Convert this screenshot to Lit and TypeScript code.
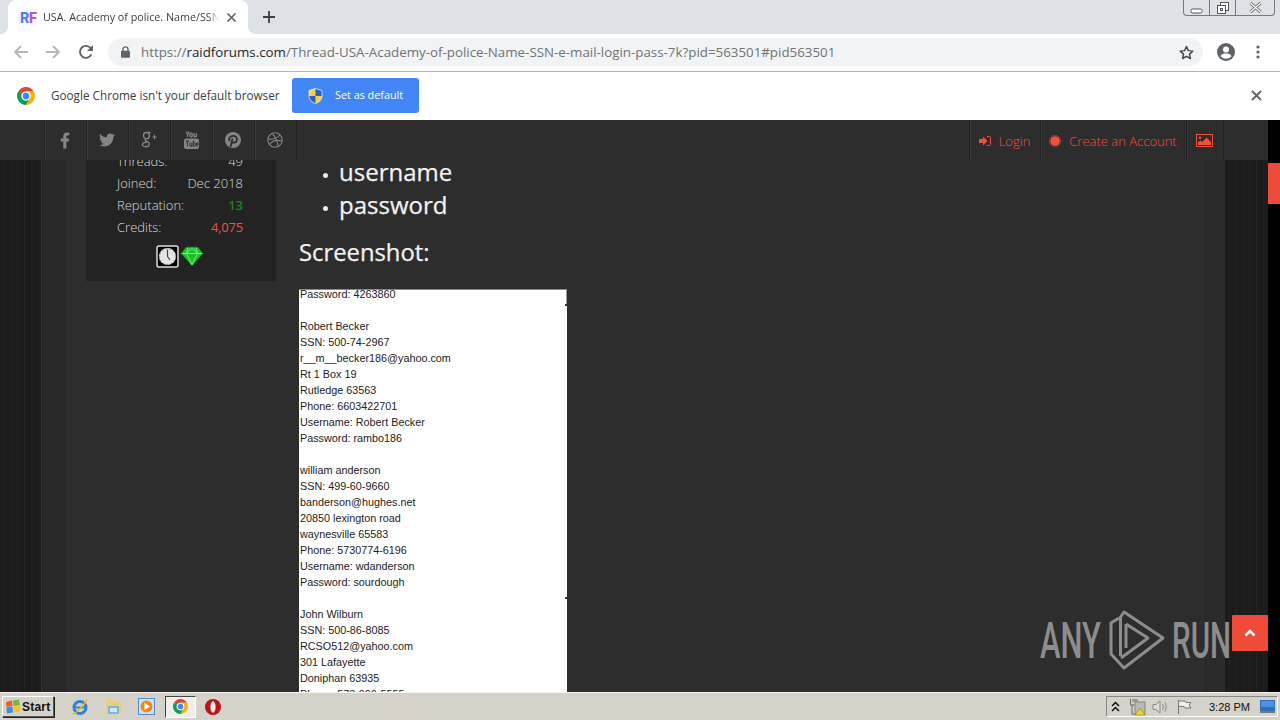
import { LitElement, html, css, svg } from "lit";
import { customElement } from "lit/decorators.js";

const chromeLogo = (size: number) => html`<svg width=${size} height=${size} viewBox="4 4 40 40">
  <path fill="#db4437" d="M6.68 14A20 20 0 0 1 41.32 14L24 14A10 10 0 0 0 15.34 19Z"/>
  <path fill="#f4b400" d="M41.32 14A20 20 0 0 1 24 44L32.66 29A10 10 0 0 0 24 14Z"/>
  <path fill="#0f9d58" d="M24 44A20 20 0 0 1 6.68 14L15.34 19A10 10 0 0 0 32.66 29Z"/>
  <circle cx="24" cy="24" r="10" fill="#fff"/><circle cx="24" cy="24" r="7.5" fill="#4285f4"/>
</svg>`;

const navIcons = [
  html`<svg width="10" height="17" viewBox="0 0 320 512"><path fill="currentColor" d="M279.14 288l14.22-92.66h-88.91v-60.13c0-25.35 12.42-50.06 52.24-50.06h40.42V6.26S260.43 0 225.36 0c-73.22 0-121.08 44.38-121.08 124.72v70.62H22.89V288h81.39v224h100.17V288z"/></svg>`,
  html`<svg width="16" height="16" viewBox="0 0 512 512"><path fill="currentColor" d="M459.37 151.716c.325 4.548.325 9.097.325 13.645 0 138.72-105.583 298.558-298.558 298.558-59.452 0-114.68-17.219-161.137-47.106 8.447.974 16.568 1.299 25.34 1.299 49.055 0 94.213-16.568 130.274-44.832-46.132-.975-84.792-31.188-98.112-72.772 6.498.974 12.995 1.624 19.818 1.624 9.421 0 18.843-1.3 27.614-3.573-48.081-9.747-84.143-51.98-84.143-102.985v-1.299c13.969 7.797 30.214 12.67 47.431 13.319-28.264-18.843-46.781-51.005-46.781-87.391 0-19.492 5.197-37.36 14.294-52.954 51.655 63.675 129.3 105.258 216.365 109.807-1.624-7.797-2.599-15.918-2.599-24.04 0-57.828 46.782-104.934 104.934-104.934 30.213 0 57.502 12.67 76.67 33.137 23.715-4.548 46.456-13.32 66.599-25.34-7.798 24.366-24.366 44.833-46.132 57.827 21.117-2.273 41.584-8.122 60.426-16.243-14.292 20.791-32.161 39.308-52.628 54.253z"/></svg>`,
  html`<svg width="17" height="18" viewBox="0 0 17 18" fill="none" stroke="currentColor" stroke-width="1.4"><path d="M9.5 1.5H5.5C3.5 1.5 2.5 3 2.5 4.5S3.6 7.8 5.5 7.8 8.4 6.2 8.4 4.7 7.4 1.6 5.6 1.6M4.6 8C3.8 8.8 4.4 9.6 5.2 10L7.4 11.4C9 12.5 8.6 15.8 5 15.8 1.8 15.8 0.8 13.8 1.8 12.5 2.6 11.4 4 11.2 5.6 11.2"/><path d="M13.5 3.8V8.2M11.3 6H15.7" stroke-width="1.2"/></svg>`,
  html`<svg width="15" height="18" viewBox="0 0 15 18"><g fill="none" stroke="currentColor" stroke-width="1.3"><path d="M2 0.5 3.6 3.2V6M5.2 0.5 3.6 3.2"/><rect x="6" y="2.2" width="2.2" height="3.6" rx="1"/><path d="M10 2V5.2C10 6 11.5 6 12 5.2M12.4 2V6"/></g><path fill="currentColor" d="M2 7.5H13C14 7.5 15 8.4 15 9.5V16C15 17 14 18 13 18H2C1 18 0 17 0 16V9.5C0 8.4 1 7.5 2 7.5Z"/><path fill="none" stroke="#2d2d2d" stroke-width="1" d="M1.8 10H5M3.4 10V15.5M6 11.5V15C6.2 15.8 7.3 15.5 7.8 15M7.9 11.5V15.5M9.4 9.6V15.5M9.4 12C10.6 11 11.3 11.7 11.3 12.8V14.2C11.3 15.3 10.2 15.8 9.4 15M12.4 13.3H14.3C14.3 11 12.4 11 12.4 13V14.3C12.4 15.5 13.6 15.7 14.3 15"/></svg>`,
  html`<svg width="16" height="16" viewBox="0 0 16 16"><circle cx="8" cy="8" r="8" fill="currentColor"/><path fill="none" stroke="#2d2d2d" stroke-width="1.8" d="M5.5 15 7.5 6.5M4.6 9.2C3 6.2 5.4 3.8 8.2 3.8 11 3.8 12.6 6 11.8 8.4 11 11 8 11.2 7 9.4"/></svg>`,
  html`<svg width="16" height="16" viewBox="0 0 16 16" fill="none" stroke="currentColor" stroke-width="1.1"><circle cx="8" cy="8" r="7.2"/><path d="M5.2 1.4C8 4.5 10.5 9.5 11.2 14.4M1 7.2C5 7.6 10 6.4 13 3M2.5 12.6C4.5 9.5 9 7.4 15 9"/></svg>`,
];

const lines = [
  "Password: 4263860", "", "Robert Becker", "SSN: 500-74-2967", "r__m__becker186@yahoo.com", "Rt 1 Box 19",
  "Rutledge 63563", "Phone: 6603422701", "Username: Robert Becker", "Password: rambo186", "",
  "william anderson", "SSN: 499-60-9660", "banderson@hughes.net", "20850 lexington road", "waynesville 65583",
  "Phone: 5730774-6196", "Username: wdanderson", "Password: sourdough", "",
  "John Wilburn", "SSN: 500-86-8085", "RCSO512@yahoo.com", "301 Lafayette", "Doniphan 63935", "Phone: 573-996-5555",
];

@customElement("app-root")
export class AppRoot extends LitElement {
  static styles = css`
    :host { display: flex; flex-direction: column; width: 1280px; height: 720px; overflow: hidden; position: relative; font-family: "Open Sans", "Noto Sans", sans-serif; background: #fff; }
    svg { display: block; flex: none; }

    .tabstrip { height: 34px; flex: none; background: #dee1e6; display: flex; align-items: stretch; padding-left: 8px; }
    .tab { position: relative; width: 240px; background: #fff; border-radius: 8px 8px 0 0; display: flex; align-items: center; padding-left: 12px; box-sizing: border-box; }
    .tab::before, .tab::after { content: ""; position: absolute; bottom: 0; width: 8px; height: 8px; }
    .tab::before { left: -8px; background: radial-gradient(circle at 0 0, transparent 8px, #fff 8.5px); }
    .tab::after { right: -8px; background: radial-gradient(circle at 100% 0, transparent 8px, #fff 8.5px); }
    .fav { width: 23px; flex: none; font: 800 14px Inter, sans-serif; letter-spacing: -0.2px; }
    .fav .r { color: #5a7cf2; } .fav .f { color: #c04fe4; }
    .title { width: 176px; overflow: hidden; white-space: nowrap; font-size: 10.75px; color: #3c4043; -webkit-mask-image: linear-gradient(to right, #000 165px, transparent 176px); mask-image: linear-gradient(to right, #000 165px, transparent 176px); }
    .tabx { margin-left: 7px; color: #5f6368; }
    .plus { margin-left: 15px; align-self: center; color: #3c4043; }
    .winctl { margin-left: auto; margin-right: 5px; width: 92px; height: 16px; box-sizing: border-box; display: flex; border: 1px solid #717784; border-top: none; border-radius: 0 0 4px 4px; }
    .winctl div { width: 25px; flex: none; display: flex; align-items: center; justify-content: center; }
    .winctl div:last-child { flex: 1; }
    .winctl div + div { border-left: 1px solid #717784; }

    .toolbar { flex: none; background: #fff; border-bottom: 1px solid #b4b4b4; display: flex; align-items: center; padding: 0 0 1px 13px; box-sizing: content-box; height: 36px; }
    .navbtn { width: 32px; display: flex; justify-content: flex-start; flex: none; }
    .omni { margin-left: -1px; width: 1095px; height: 28px; background: #f1f3f4; border-radius: 14px; display: flex; align-items: center; padding-left: 13px; box-sizing: border-box; flex: none; }
    .url { margin-left: 11px; font-size: 13.33px; color: #6f7478; white-space: nowrap; }
    .url b { font-weight: 400; color: #24272a; }
    .star { margin-left: auto; margin-right: 9px; }
    .avatar { margin-left: 14px; }
    .dots { margin-left: 21px; }

    .infobar { height: 48px; flex: none; background: #fff; display: flex; align-items: center; padding: 0 0 1px 17px; box-sizing: border-box; }
    .infotext { margin-left: 16px; font-size: 11.73px; color: #3c4043; white-space: nowrap; width: 241px; padding-bottom: 1px; }
    .setbtn { width: 127px; height: 35px; background: #4285f4; border-radius: 3px; display: flex; align-items: center; padding-left: 16px; box-sizing: border-box; color: #fff; font-size: 10.8px; gap: 12px; }
    .setbtn span { padding-bottom: 2px; }
    .infox { margin-left: auto; margin-right: 18px; color: #5f6368; }

    .page { flex: 1; min-height: 0; display: flex; flex-direction: column; background: #2d2d2d; position: relative; }
    .pagewrap { flex: 1; min-height: 0; display: flex; }
    .viewport { flex: 1; min-width: 0; display: flex; flex-direction: column; }
    .scrollbar { width: 12px; flex: none; background: #000; }
    .thumb { margin-top: 43px; height: 41px; background: #ee4b3b; }

    .nav { height: 40px; flex: none; background: #2d2d2d; display: flex; padding-left: 44px; color: #858585; }
    .nav a { width: 42px; box-sizing: border-box; border-left: 1px solid #222; box-shadow: inset 1px 0 0 #3a3a3a; display: flex; align-items: center; justify-content: center; flex: none; padding-right: 1px; }
    .nav a.end { width: 1px; padding: 0; }
    .nav .right { margin-left: auto; display: flex; color: #f2503f; font-size: 13px; font-weight: 300; margin-right: 44px; }
    .nav .right a { width: auto; gap: 8px; padding: 1px 1px 0 0; }
    .nav .right .login { width: 71px; }
    .nav .right .create { width: 146px; }
    .nav .right .pic { width: 38px; border-right: 1px solid #222; }

    .body { flex: 1; min-height: 0; display: flex; overflow: hidden; }
    .stripes { background: repeating-linear-gradient(to right, #1b1b1b 0 3px, #212121 3px 4px, #1d1d1d 4px 7px); }
    .left { width: 42px; flex: none; border-right: 1px solid #333; box-sizing: border-box; }
    .gut { width: 24px; flex: none; background: #292929; border-right: 1px solid #252525; box-sizing: border-box; }
    .main { flex: 1; min-width: 0; display: flex; padding-left: 20px; }
    .gut2 { width: 20px; flex: none; background: #2b2b2b; border-left: 1px solid #262626; box-sizing: border-box; }
    .right-side { width: 43px; flex: none; }

    .card { width: 190px; height: 121px; background: #232323; flex: none; overflow: hidden; color: #dcdcdc; font-size: 13px; font-weight: 300; box-sizing: border-box; padding: 0 33px 0 31px; }
    .rows { margin-top: -10px; }
    .row { height: 22px; display: flex; justify-content: space-between; align-items: center; }
    .green { color: #128a12; font-weight: 600; } .red { color: #f2503f; font-weight: 400; letter-spacing: -0.2px; }
    .badges { display: flex; justify-content: center; gap: 1px; margin-top: 7px; }

    .post { margin-left: 23px; flex: none; width: 600px; color: #f2f2f2; display: flex; flex-direction: column; -webkit-text-stroke: 0.25px #f2f2f2; }
    .post ul { margin: -5px 0 0; padding: 0 0 0 40px; font-size: 24px; line-height: 33px; list-style: none; font-weight: 400; }
    .post li::before { content: ""; display: inline-block; width: 5px; height: 5px; border-radius: 50%; background: #e8e8e8; margin-left: -16px; margin-right: 11px; vertical-align: 3px; }
    .post h3 { margin: 14px 0 0; font-size: 23.8px; font-weight: 400; line-height: 34px; }
    .shot { margin-top: 20px; width: 268px; flex: 1; min-height: 0; overflow: hidden; background: #fff; border-top: 1px solid #8a8a8a; position: relative; font: 10.8px/16px "Liberation Sans", Arial, sans-serif; color: #222; box-sizing: border-box; padding-left: 1px; -webkit-text-stroke: 0; }
    .shot .text { margin-top: -4px; }
    .shot .line { height: 16px; white-space: nowrap; }
    .edge { position: absolute; right: 0; top: 0; width: 1px; height: 15px; background: #999; }
    .tick { position: absolute; right: 0; width: 2px; height: 2px; background: #333; }
    .tick.a { top: 14px; } .tick.b { top: 307px; }

    .watermark { position: absolute; left: 1038px; top: 488px; pointer-events: none; }
    .totop { position: absolute; left: 1232px; top: 495px; width: 36px; height: 36px; background: #ee4b3b; border-radius: 1px; display: flex; align-items: center; justify-content: center; }

    .taskbar { height: 28px; flex: none; background: #d5d2ca; border-top: 1px solid #f4f3f0; box-sizing: border-box; display: flex; align-items: center; padding-left: 2px; }
    .start { width: 52px; height: 21px; box-sizing: border-box; display: flex; align-items: center; gap: 1px; padding-left: 2px; border: 1px solid; border-color: #fff #555 #555 #fff; box-shadow: 1px 1px 0 #222; font: 700 12px "Liberation Sans", Arial, sans-serif; letter-spacing: 0.2px; color: #111; background: #d5d2ca; }
    .tb { width: 33.5px; display: flex; justify-content: center; flex: none; }
    .tb.first { margin-left: 9px; }
    .tb.active { width: 31px; margin: 0 1px 0 1px; height: 22px; align-items: center; background: #efeeea; border: 1px solid; border-color: #444 #fff #fff #444; box-sizing: border-box; }
    .tray { margin-left: auto; margin-right: 2px; width: 172px; height: 21px; box-sizing: border-box; border: 1px solid; border-color: #888 #fff #fff #888; display: flex; align-items: center; padding-left: 4px; }
    .clock { margin-left: 17px; font: 11px "Liberation Sans", Arial, sans-serif; color: #111; white-space: nowrap; width: 51px; }
  `;

  render() {
    return html`
      <div class="tabstrip">
        <div class="tab">
          <div class="fav"><span class="r">R</span><span class="f">F</span></div>
          <div class="title">USA. Academy of police. Name/SSN/e-mail/login</div>
          <svg class="tabx" width="11" height="11" viewBox="0 0 11 11"><path stroke="currentColor" stroke-width="1.7" d="M1.5 1.5 9.5 9.5M9.5 1.5 1.5 9.5"/></svg>
        </div>
        <svg class="plus" width="12" height="12" viewBox="0 0 12 12"><path stroke="currentColor" stroke-width="1.8" d="M6 0V12M0 6H12"/></svg>
        <div class="winctl">
          <div><svg width="13" height="6" viewBox="0 0 13 6" style="margin-top:6px"><rect x="1" y="1" width="11" height="4" rx="1.5" fill="#fff" stroke="#555"/></svg></div>
          <div><svg width="14" height="14" viewBox="0 0 14 14" fill="#fff" stroke="#555"><rect x="4.5" y="1.5" width="8" height="8"/><rect x="1.5" y="4.5" width="8" height="8"/><rect x="4.5" y="7.5" width="2" height="2"/></svg></div>
          <div><svg width="13" height="11" viewBox="0 0 13 11"><path d="M1.5 1 11.5 10M11.5 1 1.5 10" stroke="#555" stroke-width="3"/><path d="M1.5 1 11.5 10M11.5 1 1.5 10" stroke="#fff" stroke-width="1.5"/></svg></div>
        </div>
      </div>

      <div class="toolbar">
        <div class="navbtn"><svg width="16" height="14" viewBox="0 0 16 14" fill="none" stroke="#b4b7bb" stroke-width="1.8"><path d="M15 7H2M8 1 2 7 8 13"/></svg></div>
        <div class="navbtn"><svg width="16" height="14" viewBox="0 0 16 14" fill="none" stroke="#b4b7bb" stroke-width="1.8"><path d="M1 7H14M8 1 14 7 8 13"/></svg></div>
        <div class="navbtn"><svg style="margin-left:1px" width="16" height="16" viewBox="0 0 16 16" fill="none" stroke="#5f6368" stroke-width="1.9"><path d="M13.4 10.4A6 6 0 1 1 13 4.6"/><path fill="#5f6368" stroke="none" d="M15 1V7H9Z"/></svg></div>
        <div class="omni">
          <svg width="9" height="12" viewBox="0 0 9 12"><path fill="none" stroke="#5f6368" stroke-width="1.3" d="M2 5V3.3A2.5 2.5 0 0 1 7 3.3V5"/><rect y="4.8" width="9" height="7" rx="1" fill="#5f6368"/></svg>
          <div class="url">https://<b>raidforums.com</b>/Thread-USA-Academy-of-police-Name-SSN-e-mail-login-pass-7k?pid=563501#pid563501</div>
          <svg class="star" width="15" height="15" viewBox="0 0 24 24"><path fill="none" stroke="#45494d" stroke-width="2.4" stroke-linejoin="round" d="M12 2.5 15 9l7 .8-5.2 4.8 1.4 7L12 18.1l-6.2 3.5 1.4-7L2 9.800 9 9Z"/></svg>
        </div>
        <svg class="avatar" width="18" height="18" viewBox="0 0 18 18"><circle cx="9" cy="9" r="9" fill="#5f6368"/><circle cx="9" cy="6.600" r="3" fill="#fff"/><path fill="#fff" d="M3.500 13.200C4.500 11 7 10.500 9 10.500S13.500 11 14.500 13.200A7 7 0 0 1 3.500 13.200Z"/></svg>
        <svg class="dots" width="4" height="14" viewBox="0 0 4 14" fill="#5f6368"><circle cx="2" cy="2" r="1.600"/><circle cx="2" cy="7" r="1.600"/><circle cx="2" cy="12" r="1.600"/></svg>
      </div>

      <div class="infobar">
        ${chromeLogo(18)}
        <div class="infotext">Google Chrome isn't your default browser</div>
        <div class="setbtn">
          <svg width="15" height="16" viewBox="0 0 15 16"><path fill="#f7d23e" d="M7.500 0.500 14 2.500V8C14 12 10.500 14.500 7.500 15.500 4.500 14.500 1 12 1 8V2.500Z"/><path fill="#2c5fc4" d="M7.500 0.500 14 2.500V8H7.500ZM7.500 8V15.500C4.500 14.500 1 12 1 8Z"/><path fill="none" stroke="#fff" stroke-width="0.7" d="M7.500 0.500 14 2.500V8C14 12 10.500 14.500 7.500 15.500 4.500 14.500 1 12 1 8V2.500Z"/></svg>
          <span>Set as default</span>
        </div>
        <svg class="infox" width="11" height="11" viewBox="0 0 11 11"><path stroke="currentColor" stroke-width="1.800" d="M1 1 10 10M10 1 1 10"/></svg>
      </div>

      <div class="page">
        <div class="pagewrap">
          <div class="viewport">
            <div class="nav">
              ${navIcons.map((i) => html`<a>${i}</a>`)}
              <a class="end"></a>
              <div class="right">
                <a class="login">
                  <svg width="12" height="12" viewBox="0 0 12 12"><path fill="currentColor" d="M0 4H4V1.500L8.500 6 4 10.500V8H0Z"/><path fill="none" stroke="currentColor" d="M8 1.500H10.500C11 1.500 11.500 2 11.500 2.500V9.500C11.500 10 11 10.500 10.500 10.500H8"/></svg>
                  <span>Login</span>
                </a>
                <a class="create">
                  <svg width="12" height="12" viewBox="0 0 12 12"><circle cx="6" cy="6" r="4.800" fill="currentColor"/><circle cx="6" cy="6" r="5.600" fill="none" stroke="currentColor" stroke-dasharray="1.200 1.200"/></svg>
                  <span>Create an Account</span>
                </a>
                <a class="pic">
                  <svg width="17" height="13" viewBox="0 0 17 13"><rect x="0.500" y="0.500" width="16" height="12" fill="none" stroke="currentColor"/><circle cx="4" cy="3.800" r="1.300" fill="currentColor"/><path fill="currentColor" d="M2 11V8.500L4.500 6.500 6.500 8 10.500 3.500 15 8V11Z"/></svg>
                </a>
              </div>
            </div>
            <div class="body">
              <div class="left stripes"></div>
              <div class="gut"></div>
              <div class="main">
                <div class="card">
                  <div class="rows">
                    <div class="row"><span>Threads:</span><span>49</span></div>
                    <div class="row"><span>Joined:</span><span>Dec 2018</span></div>
                    <div class="row"><span>Reputation:</span><span class="green">13</span></div>
                    <div class="row"><span>Credits:</span><span class="red">4,075</span></div>
                  </div>
                  <div class="badges">
                    <svg width="23" height="23" viewBox="0 0 23 23"><rect x="1" y="1" width="21" height="21" rx="2" fill="#000" stroke="#ddd" stroke-width="1.500"/><circle cx="11.500" cy="11.500" r="8.500" fill="#e4e4e4"/><path stroke="#444" stroke-width="1.200" d="M11.500 11.500V4.500M11.500 11.500 14 15"/><circle cx="11.500" cy="11.500" r="8" fill="none" stroke="#777" stroke-width="1.200" stroke-dasharray="1 3"/></svg>
                    <svg width="24" height="22" viewBox="0 0 24 22"><path fill="#1fc22c" stroke="#0d5a14" stroke-width="1" d="M6 2H18L23 8.500 12 21 1 8.500Z"/><path fill="none" stroke="#8cf08a" stroke-width="0.800" d="M1.500 8.500H22.500M8 2.500 6.500 8.500 12 20 17.500 8.500 16 2.500M6.500 8.500 12 2.500 17.500 8.500"/></svg>
                  </div>
                </div>
                <div class="post">
                  <ul><li>username</li><li>password</li></ul>
                  <h3>Screenshot:</h3>
                  <div class="shot">
                    <div class="text">${lines.map((l) => html`<div class="line">${l}</div>`)}</div>
                    <div class="edge"></div><div class="tick a"></div><div class="tick b"></div>
                  </div>
                </div>
              </div>
              <div class="gut2"></div>
              <div class="right-side stripes"></div>
            </div>
          </div>
          <div class="scrollbar"><div class="thumb"></div></div>
        </div>

        <svg class="watermark" width="196" height="66" viewBox="1038 608 196 66">
          <g fill="#8d8d8d" font-family="Roboto, 'Liberation Sans', sans-serif" font-size="50" font-weight="500">
            <text x="1040" y="658" textLength="61" lengthAdjust="spacingAndGlyphs">ANY</text>
            <text x="1172" y="658" textLength="59" lengthAdjust="spacingAndGlyphs">RUN</text>
          </g>
          ${svg`<g fill="none" stroke="#8d8d8d" stroke-width="3" stroke-linejoin="round">
            <path d="M1119 618 1111 623V654L1124 668 1163 638 1124 612 1120.500 617V656"/>
            <path d="M1126 624 1148 638 1121 658"/>
            <path d="M1126 624V648"/>
          </g>`}
        </svg>
        <div class="totop"><svg width="12" height="8" viewBox="0 0 12 8"><path fill="none" stroke="#fff" stroke-width="2.500" d="M1.500 6.500 6 2 10.500 6.500"/></svg></div>
      </div>

      <div class="taskbar">
        <div class="start">
          <svg width="16" height="15" viewBox="0 0 16 15"><path fill="#e8622c" d="M1 3 7 1.500 7.500 7 1.500 8Z"/><path fill="#7db343" d="M8 1.500 14 0.500 15 6 8.500 7Z"/><path fill="#3f8de0" d="M1.500 8.500 7.500 7.500 8 13.500 2 14.500Z"/><path fill="#f5c52e" d="M8.500 7.500 15 6.500 15.500 12.500 9 13.500Z"/></svg>
          <span>Start</span>
        </div>
        <div class="tb first"><svg width="18" height="18" viewBox="0 0 18 18"><circle cx="9" cy="9.500" r="6" fill="none" stroke="#2f80d8" stroke-width="3"/><path d="M4 9.500H14" stroke="#2f80d8" stroke-width="2"/><path d="M1 16C3 17 10 11 16 2" fill="none" stroke="#e8b92e" stroke-width="1.500"/></svg></div>
        <div class="tb"><svg width="17" height="17" viewBox="0 0 17 17"><path fill="#e9cf7a" d="M1 1H7L8 3H16V15H1Z"/><path fill="#7fb6dc" d="M3 8H14V16H3Z"/><path fill="#cfe6f3" d="M5 10H12V14H5Z"/></svg></div>
        <div class="tb"><svg width="17" height="17" viewBox="0 0 17 17"><rect x="0.500" y="0.500" width="16" height="16" fill="#cfe0f3" stroke="#4f8fd0"/><circle cx="8.500" cy="8.500" r="6" fill="#ee8a1d"/><path fill="#fff" d="M6.500 5 12 8.500 6.500 12Z"/></svg></div>
        <div class="tb active">${chromeLogo(15)}</div>
        <div class="tb"><svg width="16" height="16" viewBox="0 0 16 16"><circle cx="8" cy="8" r="8" fill="#b8141b"/><ellipse cx="8" cy="8" rx="2.600" ry="5.800" fill="#f3e9e4"/></svg></div>
        <div class="tray">
          <svg width="9" height="11" viewBox="0 0 9 11" fill="none" stroke="#111" stroke-width="1.500"><path d="M1 5 4.500 1.500 8 5M1 10 4.500 6.500 8 10"/></svg>
          <svg style="margin-left:9px" width="17" height="18" viewBox="0 0 17 18"><path fill="none" stroke="#666" d="M1.500 1V7H8V1M4 1V4M6 1V4M3 7V16H10"/><rect x="6" y="4" width="10" height="12" fill="#b9b9b4" stroke="#888"/><path fill="#f3d22a" stroke="#8a7a10" stroke-width="0.600" d="M11 10 16 17H6Z"/></svg>
          <svg style="margin-left:6px" width="17" height="16" viewBox="0 0 17 16" fill="none" stroke="#8a8a8a"><path fill="#dcdcdc" d="M1 5.500H4L8 2V14L4 10.500H1Z"/><path d="M10.500 5C11.500 7 11.500 9 10.500 11M13 3.500C14.500 6 14.500 10 13 12.500"/></svg>
          <svg style="margin-left:8px" width="15" height="16" viewBox="0 0 15 16" fill="none" stroke="#777"><path d="M1.500 1V15"/><path fill="#eee" d="M1.500 2H8L9 3.500H14L12 6 14 9H8L7 7.500H1.500Z"/></svg>
          <div class="clock">3:28 PM</div>
          <svg width="15" height="13" viewBox="0 0 15 13"><rect width="15" height="11" fill="#2f6fc0"/><rect x="1" y="1" width="13" height="6" fill="#4c95dc"/><rect y="11" width="15" height="2" fill="#777"/></svg>
        </div>
      </div>
    `;
  }
}
